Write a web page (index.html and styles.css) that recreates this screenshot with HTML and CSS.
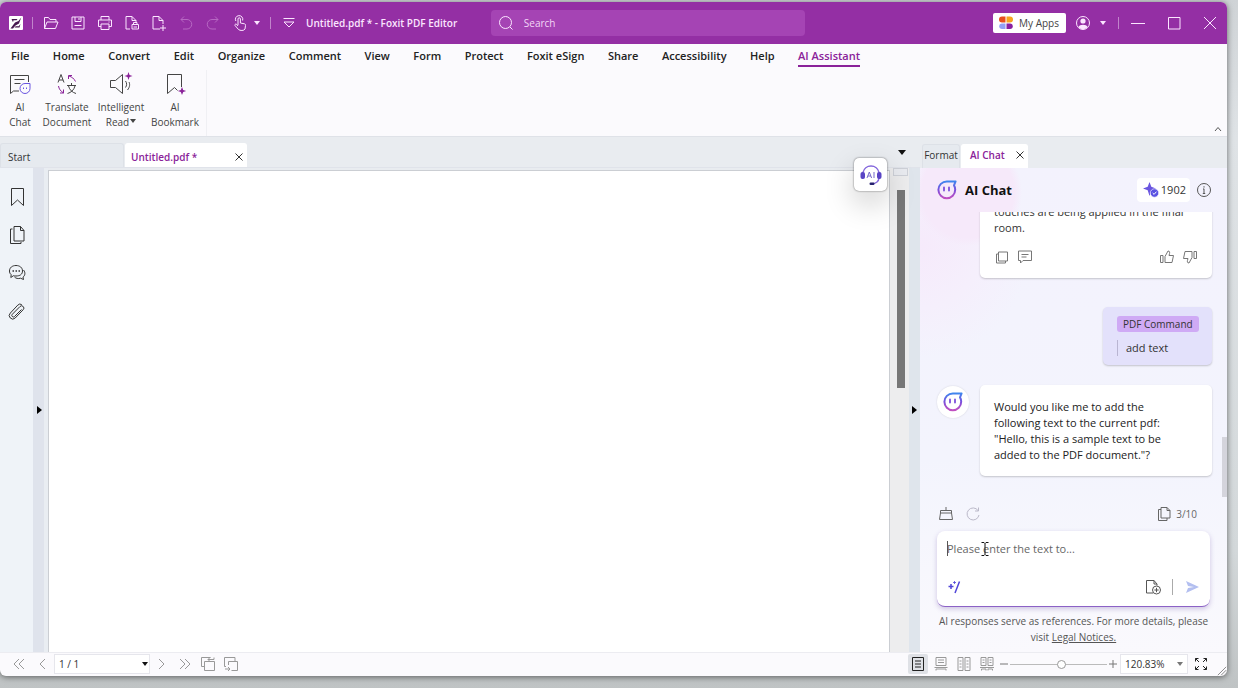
FILE: index.html
```html
<!DOCTYPE html>
<html lang="en">
<head>
<meta charset="utf-8">
<title>Untitled.pdf * - Foxit PDF Editor</title>
<link rel="stylesheet" href="styles.css">
</head>
<body>
<svg class="defs" aria-hidden="true">
  <defs>
    <linearGradient id="brand" x1="0" y1="0" x2="0" y2="1">
      <stop offset="0" stop-color="#3f86ee"/><stop offset=".5" stop-color="#7b4fdc"/><stop offset="1" stop-color="#c04fc0"/>
    </linearGradient>
    <symbol id="bot" viewBox="0 0 20 20">
      <path d="M18.600 1.400H9.800A8.400 8.400 0 1 0 18.200 9.800C18.200 7.800 17.700 6.400 17 5.400Z" fill="none" stroke="url(#brand)" stroke-width="2" stroke-linejoin="round"/>
      <path d="M7 7.500v3M12 7.500v3" stroke="#7b4fdc" stroke-width="1.800" stroke-linecap="round"/>
    </symbol>
  </defs>
</svg>
<div class="window">
  <header class="titlebar">
    <svg class="icon logo" viewBox="0 0 14 14"><rect width="14" height="14" rx="1" fill="#fff"/><path d="M2.500 3h6l-1 1.200h-3L4 6.200ZM12.200 1.500L10 7.500 6.500 9.500 4 12.500H1.500L6 6.500 9.500 5ZM11.500 8L10.500 11.500H5.500l1.200-1.200h3Z" fill="#47184f"/></svg>
    <span class="bar"></span>
    <div class="quick">
      <button aria-label="Open"><svg class="icon" viewBox="0 0 16 16"><path d="M1.500 13.500v-11h4l1.500 2h6v2.500M1.500 13.500L4 7h11l-2.500 6.500Z"/></svg></button>
      <button aria-label="Save"><svg class="icon" viewBox="0 0 16 16"><path d="M2 2h12v12H2ZM5 2v4.500h6V2M9 3v2M4.500 10.500h7"/></svg></button>
      <button aria-label="Print"><svg class="icon" viewBox="0 0 16 16"><path d="M4 5V1.500h8V5M4 11.500H1.500v-6.500h13v6.500H12M4 9h8v5.500H4ZM11.500 7h1"/></svg></button>
      <button aria-label="Print to PDF"><svg class="icon" viewBox="0 0 16 16"><path d="M6 14H2V1.500h6L12 5.500V7M8 1.500v4h4M8 9.500h6.500v4.500H8ZM9.500 9.500V7.500h3.500v2M9.500 12h3.500"/></svg></button>
      <button aria-label="New document"><svg class="icon" viewBox="0 0 16 16"><path d="M9 14H2V1.500h6L12 5.500V9M8 1.500v4h4M12 10v6M9 13h6"/></svg></button>
      <button class="dim" aria-label="Undo"><svg class="icon" viewBox="0 0 16 16"><path d="M6 1.500L3 4.500 6 7.500M3 4.500h6a4.500 4.500 0 0 1 0 9.500H5"/></svg></button>
      <button class="dim" aria-label="Redo"><svg class="icon" viewBox="0 0 16 16"><path d="M10 1.500l3 3-3 3M13 4.500H7a4.500 4.500 0 0 0 0 9.500h4"/></svg></button>
      <button aria-label="Hand tool"><svg class="icon" viewBox="0 0 16 16"><path d="M6 10V4a1.200 1.200 0 0 1 2.400 0v4l4 .8c1 .2 1.300.8 1.100 1.700L13 14c-1 2-5 1.800-6.500.5L3 10.500c-.5-1.500 1-1.700 1.800-1L6 11M3.800 6A3.700 3.700 0 1 1 10.600 5.500"/></svg></button>
    </div>
    <svg class="caret" viewBox="0 0 6 4"><path d="M0 0h6L3 4Z"/></svg>
    <span class="bar"></span>
    <button class="customize" aria-label="Customize toolbar"><svg class="icon" viewBox="0 0 16 16"><path d="M2.500 3.500h11M3 7l5 5 5-5Z"/></svg></button>
    <h1 class="title">Untitled.pdf * - Foxit PDF Editor</h1>
    <label class="search">
      <svg class="icon" viewBox="0 0 16 16"><circle cx="7.500" cy="7.500" r="6"/><path d="M12 12l2.500 2.500"/></svg>
      <input type="text" placeholder="Search" aria-label="Search">
    </label>
    <div class="account">
      <button class="apps"><svg class="icon" viewBox="0 0 14 14"><path d="M3.500 0.500H6.500V6.500H3a3 3 0 0 1 0-6Z" fill="#e8501c"/><path d="M7.500.500H11a3 3 0 0 1 0 6H7.500Z" fill="#f7a41d"/><path d="M3 7.500H6.500V13H3a2.700 2.700 0 0 1 0-5.500Z" fill="#93a0f4"/><path d="M7.500 7.500H11a2.700 2.700 0 0 1 0 5.500H7.500Z" fill="#8a1fa0"/></svg>My Apps</button>
      <button aria-label="Account"><svg class="icon" viewBox="0 0 16 16"><circle cx="8" cy="8" r="6.500"/><circle cx="8" cy="6" r="2.600" class="solid"/><path class="solid" d="M3.500 12c1-3 8-3 9 0-2 3-7 3-9 0Z"/></svg></button>
      <svg class="caret" viewBox="0 0 6 4"><path d="M0 0h6L3 4Z"/></svg>
      <span class="bar"></span>
    </div>
    <div class="controls">
      <button aria-label="Minimize"><svg class="icon" viewBox="0 0 16 16"><path d="M1 8.500h14"/></svg></button>
      <button aria-label="Maximize"><svg class="icon" viewBox="0 0 16 16"><path d="M2.500 2.500h11.500v11.500H2.500Z"/></svg></button>
      <button aria-label="Close"><svg class="icon" viewBox="0 0 16 16"><path d="M2 2l12 12M14 2L2 14"/></svg></button>
    </div>
  </header>

  <nav class="menu">
    <button>File</button><button>Home</button><button>Convert</button><button>Edit</button><button>Organize</button><button>Comment</button><button>View</button><button>Form</button><button>Protect</button><button>Foxit eSign</button><button>Share</button><button>Accessibility</button><button>Help</button><button class="current">AI Assistant</button>
  </nav>

  <section class="ribbon">
    <div class="group">
      <button class="narrow"><svg viewBox="0 0 24 24"><path d="M20.500 10V3.500H2.500v18l3-2.500H11M6.500 7.500h10M6.500 11.500h6"/><path class="blue" d="M22 11.500H17a5 5 0 1 0 5 5Z"/><path class="blue" d="M15.500 15.500v1.500M18.500 15.500v1.500"/></svg><span>AI<br>Chat</span></button>
      <button><svg viewBox="0 0 24 24"><path d="M3 10.500L6 2.500l3 8M4 8h4M12 13.500h9M16.500 11v2.500M13.500 14c1 4 4 6.500 7.500 7.500M20 14c-1 4-4 6.500-7.500 7.500"/><path class="accent" d="M13.500 3.500h3.500M13.500 3.500V7M14 4c3 1 5 2.500 6.500 5.500M3.500 14c.5 3 2 5 5 7M8.500 17.500V21H5"/></svg><span>Translate<br>Document</span></button>
      <button><svg viewBox="0 0 24 24"><path d="M1.500 8.500h5l7-6v19l-7-6h-5ZM16.500 9c1.500 2 1.500 4.500 0 6.500M18.500 18c2.500-3 2.500-6 1.500-8"/><path class="spark" d="M19.500 0l1 3 3 1-3 1-1 3-1-3-3-1 3-1Z"/></svg><span>Intelligent<br>Read<svg class="tiny" viewBox="0 0 6 4"><path d="M0 0h6L3 4Z"/></svg></span></button>
      <button><svg viewBox="0 0 24 24"><path d="M18.500 15V2.500H4.500v19l7-6 3 3"/><path class="spark" d="M19 15l1.200 3 3 1-3 1L19 23l-1.200-3-3-1 3-1Z"/></svg><span>AI<br>Bookmark</span></button>
    </div>
    <button class="collapse" aria-label="Collapse ribbon"><svg viewBox="0 0 8 6"><path d="M1 5l3-3.500L7 5"/></svg></button>
  </section>

  <main class="workspace">
    <section class="document">
      <div class="tabs">
        <button class="tab">Start</button>
        <button class="tab open">Untitled.pdf * <svg viewBox="0 0 8 8"><path d="M.500.500l7 7M7.500.500l-7 7"/></svg></button>
        <button class="tablist" aria-label="List tabs"><svg viewBox="0 0 8 5"><path d="M0 0h8L4 5Z"/></svg></button>
      </div>
      <div class="viewer">
        <aside class="side">
          <button aria-label="Bookmarks"><svg viewBox="0 0 18 20"><path d="M3.500 1.500h12v17l-6-5.500-6 5.500Z"/></svg></button>
          <button aria-label="Pages"><svg viewBox="0 0 18 20"><path d="M6 1.500h6.500l3.500 4v10.500H6ZM12.500 1.500v4H16M4.500 4H2.500v14.500H13V17"/></svg></button>
          <button aria-label="Comments"><svg viewBox="0 0 18 20"><path d="M8 2.500c3.800 0 6.500 2.200 6.500 5.500S12 13 8 13c-1 0-1.600 0-2.500-.3L2.800 14.500l.4-2.800C1.900 10.600 1.500 9.500 1.500 8c0-3.300 2.700-5.500 6.500-5.500ZM15.500 7c2.500 3 1.200 6-.5 7l.5 2.500-3-1.300c-2.500.8-4.500.2-6-1.200"/><path d="M4.500 8h1.500M7.500 8H9M10.500 8H12" stroke-width="1.600"/></svg></button>
          <button aria-label="Attachments"><svg viewBox="0 0 18 20"><path d="M13.500 8.500l-7 7a1.500 1.500 0 0 1-2.200-2.200L12 5.500a2.200 2.200 0 0 1 3.200 3.200l-8 8.300a3.400 3.400 0 0 1-4.900-4.900l7.500-8a3 3 0 0 1 4-.4"/></svg></button>
        </aside>
        <div class="split left"><svg viewBox="0 0 5 8"><path d="M0 0l5 4-5 4Z"/></svg></div>
        <div class="page"></div>
        <div class="scroll"><span class="marker"></span><span class="thumb"></span></div>
        <div class="split"><svg viewBox="0 0 5 8"><path d="M0 0l5 4-5 4Z"/></svg></div>
      </div>
      <button class="assistant" aria-label="AI assistant"><svg viewBox="0 0 24 24"><path d="M4 9.500a8.200 8.200 0 0 1 16 0M20 15c-.5 4-3 5.500-7 5.800" fill="none" stroke="#8467dc" stroke-width="1.500"/><rect x="1.500" y="9" width="4.500" height="7" rx="2" fill="#5944c4"/><rect x="18" y="9" width="4.500" height="7" rx="2" fill="#5944c4"/><rect x="10.500" y="19.500" width="5" height="2.500" rx="1.200" fill="#26216e"/><path d="M8 15l2.300-6 2.300 6M8.800 13h3M15 9v6" fill="none" stroke="#7669c9"/></svg></button>
    </section>

    <aside class="panel">
      <div class="tabs paneltabs">
        <button class="tab small">Format</button>
        <button class="tab open">AI Chat <svg viewBox="0 0 8 8"><path d="M.500.500l7 7M7.500.500l-7 7"/></svg></button>
      </div>
      <div class="chat">
        <header class="chathead">
          <svg class="bot"><use href="#bot"/></svg>
          <h2>AI Chat</h2>
          <span class="credits"><svg viewBox="0 0 16 16"><path d="M6.500 0l1.800 4.700L13 6.500 8.300 8.300 6.500 14 4.700 8.300 0 6.500l4.700-1.800Z" fill="#6a55e0"/><circle cx="11.500" cy="11" r="4.200" fill="#5a52e2" stroke="#fff" stroke-width=".6"/><path d="M9.700 11l1.400 1.400 2.300-2.700" fill="none" stroke="#fff"/></svg>1902</span>
          <button class="info" aria-label="Information"><svg viewBox="0 0 16 16"><circle cx="8" cy="8" r="6.500"/><path d="M8 6.800v4.700M8 4.200v1.400M6.800 11.500h2.400M7 7h1"/></svg></button>
        </header>
        <div class="messages">
          <article class="card">
            <p>touches are being applied in the final room.</p>
            <div class="tools">
              <button aria-label="Copy"><svg viewBox="0 0 16 16"><path d="M4.500 3h9v9h-9ZM4.500 5H2.500v9H11.500V12"/></svg></button>
              <button aria-label="Comment"><svg viewBox="0 0 16 16"><path d="M1.500 2h13v9.500H6L3.500 14V11.500h-2ZM4.500 5.500h7M4.500 8h5"/></svg></button>
              <button class="push" aria-label="Like"><svg viewBox="0 0 16 16"><path d="M1.500 6.500H4v7H1.500ZM6 13V7.500L9 2c2 0 2 1.500 1 4.500h4.500l-1.500 7H6Z"/></svg></button>
              <button aria-label="Dislike"><svg viewBox="0 0 16 16"><path d="M14.500 9.500H12v-7h2.500ZM10 3v5.500L7 14c-2 0-2-1.500-1-4.500H1.500l1.500-7h7Z"/></svg></button>
            </div>
          </article>
          <article class="command"><span class="tag">PDF Command</span><p>add text</p></article>
          <div class="reply">
            <span class="avatar"><svg class="bot"><use href="#bot"/></svg></span>
            <article class="card"><p>Would you like me to add the following text to the current pdf: "Hello, this is a sample text to be added to the PDF document."?</p></article>
          </div>
        </div>
        <div class="session">
          <button aria-label="Clear chat"><svg viewBox="0 0 16 16"><path d="M2.500 4.500h11M2.500 4.500V7M13.500 4.500V7M2.500 7h11l1 6.500h-13ZM8 1v3.500"/></svg></button>
          <button class="faint" aria-label="Regenerate"><svg viewBox="0 0 16 16"><path d="M13 4.500A6 6 0 1 0 14 9M13.500 1.500v3.500H10"/></svg></button>
          <span class="count"><svg viewBox="0 0 16 16"><path d="M5 1.500h6l3 3V12H5ZM11 1.500v3h3M5 3.500H2.500v11H11V12"/></svg>3/10</span>
        </div>
        <div class="composer">
          <textarea rows="2" placeholder="Please enter the text to..." aria-label="Message"></textarea>
          <span class="insertion"></span>
          <svg class="pointer" viewBox="0 0 10 16"><path d="M1.500 1.500h2.500l1 1 1-1h2.500M5 2.500v11M1.500 14.500h2.500l1-1 1 1h2.500"/></svg>
          <div class="actions">
            <button aria-label="Prompts"><svg viewBox="0 0 16 16" class="magic"><path d="M12.500 2.500L8 14M1.500 7.500h5M4 5v5"/><path d="M7.500 2v3M6 3.500h3" stroke-width=".8"/></svg></button>
            <button class="push" aria-label="Add document"><svg viewBox="0 0 16 16"><path d="M8 14H1.500V1.500H9l3 3.500v1.500M9 1.500V5h3"/><circle cx="11.500" cy="11" r="4"/><path d="M11.500 8.800v4.400M9.300 11h4.400"/></svg></button>
            <span class="rule"></span>
            <button aria-label="Send"><svg viewBox="0 0 16 16"><path d="M2 2l13 6L2 14l2-5 6-1-6-1Z" fill="#b3bff0" stroke="none"/></svg></button>
          </div>
        </div>
        <p class="notice">AI responses serve as references. For more details, please visit <a href="#">Legal Notices.</a></p>
        <span class="chatscroll"></span>
      </div>
    </aside>
  </main>

  <footer class="status">
    <button aria-label="First page"><svg viewBox="0 0 16 16"><path d="M8 3L3 8l5 5M13 3L8 8l5 5"/></svg></button>
    <button aria-label="Previous page"><svg viewBox="0 0 16 16"><path d="M11 3L6 8l5 5"/></svg></button>
    <span class="pick pages"><select aria-label="Page"><option>1 / 1</option></select><svg viewBox="0 0 6 4"><path d="M0 0h6L3 4Z"/></svg></span>
    <button aria-label="Next page"><svg viewBox="0 0 16 16"><path d="M5 3l5 5-5 5"/></svg></button>
    <button aria-label="Last page"><svg viewBox="0 0 16 16"><path d="M3 3l5 5-5 5M8 3l5 5-5 5"/></svg></button>
    <button aria-label="Previous view"><svg viewBox="0 0 16 16"><path d="M4.500 5.500h10v9h-10ZM4 10.500H1.500v-9h9M14 1.500v2H8M10 1.500l-2 2 2 2"/></svg></button>
    <button aria-label="Next view"><svg viewBox="0 0 16 16"><path d="M12 5V1.500H1.500v9H3M5.500 5.500h9v9h-6M5.500 5.500V9M2 13h5M5 11l2 2-2 2"/></svg></button>
    <div class="views">
      <button class="on" aria-label="Single page"><svg viewBox="0 0 16 16"><path d="M2.500 1.500h11v13h-11ZM5 5h6M5 8h6M5 11h6"/></svg></button>
      <button aria-label="Continuous"><svg viewBox="0 0 16 16"><path d="M3 1.500h10v8H3ZM5 4h6M5 6.500h6M1.500 11.500h13M3 14.500v-1.500h10v1.500"/></svg></button>
      <button aria-label="Facing"><svg viewBox="0 0 16 16"><path d="M2 1.500h5v13H2ZM9 1.500h5v13H9ZM3.500 5h2M3.500 8h2M3.500 11h2M10.500 5h2M10.500 8h2M10.500 11h2"/></svg></button>
      <button aria-label="Continuous facing"><svg viewBox="0 0 16 16"><path d="M2 1.500h5v8H2ZM9 1.500h5v8H9ZM3.500 4h2M3.500 6.500h2M10.500 4h2M10.500 6.500h2M1 11.500h14M2.500 14.500v-1.500H7v1.500M9 14.500v-1.500h4.500v1.500"/></svg></button>
      <button class="step" aria-label="Zoom out"><svg viewBox="0 0 8 8"><path d="M0 4h8"/></svg></button>
      <input type="range" aria-label="Zoom" min="0" max="100" value="53">
      <button class="step" aria-label="Zoom in"><svg viewBox="0 0 8 8"><path d="M0 4h8M4 0v8"/></svg></button>
      <span class="pick zoom"><select aria-label="Zoom level"><option>120.83%</option></select><svg viewBox="0 0 6 4"><path d="M0 0h6L3 4Z"/></svg></span>
      <button class="full" aria-label="Full screen"><svg viewBox="0 0 16 16"><path d="M2.500 5.500v-3h3M2.500 2.500L6 6M10.500 2.500h3v3M13.500 2.500L10 6M2.500 10.500v3h3M2.500 13.500L6 10M13.500 10.500v3h-3M13.500 13.500L10 10"/></svg></button>
    </div>
    <svg class="grip" viewBox="0 0 12 12"><path d="M1 11L11 1M5 11l6-6M9 11l2-2"/></svg>
  </footer>
</div>
</body>
</html>
```
FILE: styles.css
```css
* { box-sizing: border-box; }
body { margin: 0; height: 100vh; padding: 2px 11px 12px 0; display: flex; background: linear-gradient(180deg, #cfd3d6, #dfe3e6 20%, #d3d8da 80%, #bfc3c4); font-family: "Open Sans", "Noto Sans", sans-serif; font-size: 10px; line-height: 16px; color: #333; }
h1, h2, p { margin: 0; font: inherit; }
button, input, select, textarea { font: inherit; color: inherit; border: 0; background: none; padding: 0; margin: 0; outline: 0; }
button { display: flex; align-items: center; justify-content: center; }
svg { display: block; flex: none; width: 16px; height: 16px; fill: none; stroke: currentColor; stroke-width: 1; }
.defs { position: absolute; width: 0; height: 0; }
.window { flex: 1; min-width: 0; display: flex; flex-direction: column; background: #fbfafd; border-radius: 6px; overflow: hidden; box-shadow: 0 1px 6px #0008; }

.titlebar { flex: none; height: 42px; display: flex; align-items: center; padding: 0 9px; background: #942fa4; color: #fbe6ff; position: relative; }
.titlebar .logo { width: 14px; height: 14px; stroke: none; }
.bar { width: 1px; height: 12px; background: #c184cb; }
.logo + .bar { margin: 0 10px 0 9px; }
.quick { display: flex; gap: 11px; }
.dim { color: #b768c3; }
.caret, .tiny { width: 6px; height: 4px; fill: currentColor; stroke: none; }
.quick + .caret { margin: 0 10px 0 6px; }
.customize { margin: 0 9px 0 10px; }
.title { font-weight: 600; }
.search { position: absolute; left: 40%; top: 8px; width: 314px; height: 26px; display: flex; align-items: center; gap: 10px; padding-left: 7px; background: #a544b4; border-radius: 4px; }
.search input { flex: 1; min-width: 0; }
.search input::placeholder { color: #f3d6f7; opacity: 1; }
.account { margin-left: auto; display: flex; align-items: center; gap: 9px; }
.apps { height: 20px; padding: 0 7px 0 6px; gap: 6px; background: #fff; border-radius: 2px; color: #444; }
.apps svg { width: 14px; height: 14px; stroke: none; }
.account .bar { margin: 0 4px 0 3px; }
.account .solid { fill: currentColor; stroke: none; }
.controls { display: flex; gap: 20px; margin-left: 7px; }

.menu { flex: none; width: 71%; height: 26px; padding: 0 11px; display: flex; align-items: center; justify-content: space-between; font-size: 11px; font-weight: 600; color: #222; }
.menu button { height: 20px; border-bottom: 2px solid transparent; white-space: nowrap; }
.menu .current { color: #8a2299; border-color: #8a2299; }
.ribbon { flex: none; height: 67px; display: flex; align-items: flex-end; justify-content: space-between; border-bottom: 1px solid #dfe2e8; }
.group { align-self: stretch; display: flex; width: 207px; padding-top: 2px; border-right: 1px solid #f0f0f4; }
.group button { flex-direction: column; justify-content: flex-start; width: 54px; gap: 4px; color: #444; }
.group .narrow { width: 40px; }
.group svg { width: 24px; height: 24px; }
.group span { line-height: 15px; white-space: nowrap; }
.group .tiny { display: inline-block; width: 6px; height: 4px; margin: 0 0 3px 1px; }
.group .blue { stroke: #6a55e0; }
.group .accent { stroke: #8a2299; }
.group .spark { fill: #8a2299; stroke: none; }
.collapse { padding: 4px 5px; color: #555; }
.collapse svg { width: 8px; height: 6px; }

.workspace { flex: 1; min-height: 0; display: flex; background: #e9ecf0; }
.document { flex: 1; min-width: 0; display: flex; flex-direction: column; position: relative; }
.tabs { flex: none; height: 31px; display: flex; align-items: flex-end; gap: 1px; border-bottom: 1px solid #e0e3ea; }
.tab { width: 124px; height: 24px; padding: 2px 7px 0; justify-content: flex-start; background: #e6eaef; border: 1px solid #dde1e7; border-bottom: 0; border-radius: 3px 3px 0 0; }
.tab.open { width: 122px; padding: 2px 3px 0 5px; justify-content: space-between; background: #fff; border-color: #fff; color: #8a2299; font-weight: 600; }
.tab svg { width: 8px; height: 8px; color: #333; }
.tablist { height: 30px; margin-left: auto; padding: 0 14px; color: #111; }
.tablist svg { width: 8px; height: 5px; fill: currentColor; stroke: none; }
.viewer { flex: 1; min-height: 0; display: flex; }
.side { width: 33px; padding-top: 19px; display: flex; flex-direction: column; align-items: center; gap: 18px; background: #eff3f8; }
.side svg { width: 18px; height: 20px; }
.split { width: 11px; display: flex; align-items: center; justify-content: center; background: #dfe5ec; }
.split.left { width: 15px; background: linear-gradient(90deg, #dfe3ec 11px, #e9edf2 11px); padding-right: 3px; }
.split svg { width: 5px; height: 8px; fill: #000; stroke: none; }
.page { flex: 1; margin-top: 2px; background: #fff; border: 1px solid #cbced3; border-bottom: 0; }
.scroll { width: 19px; display: flex; flex-direction: column; align-items: center; background: #ededee; padding-left: 2px; }
.marker { width: 15px; height: 8px; border: 1px solid #ced1d8; background: #e9ebf0; }
.thumb { width: 8px; height: 41%; margin-top: 14px; background: #777; }
.assistant { position: absolute; right: 33px; top: 21px; width: 33px; height: 33px; background: #fff; border-radius: 5px; box-shadow: 0 0 2px #0009, 0 12px 30px #0003; }
.assistant svg { width: 24px; height: 24px; stroke: none; }

.panel { width: 307px; display: flex; flex-direction: column; }
.paneltabs { gap: 1px; padding-left: 2px; border-bottom: 0; }
.paneltabs .tab { width: 38px; padding: 0 0 4px; justify-content: center; }
.paneltabs .tab.open { width: 67px; padding: 0 3px 4px 8px; justify-content: space-between; }
.chat { flex: 1; min-height: 0; position: relative; display: flex; flex-direction: column; background: radial-gradient(circle at 48px 24px, #f6e9fa 0 46px, transparent 54px), radial-gradient(circle at 0 80px, #f6eafb 0, #f5effc 60px, transparent 110px), linear-gradient(#f3f2fd, #f3f4fd 60%, #faf9fd); }
.chathead { flex: none; height: 44px; padding: 0 15px 0 17px; display: flex; align-items: center; }
.bot { width: 20px; height: 20px; stroke: none; }
.chathead h2 { margin-left: 8px; font-size: 13px; font-weight: 700; color: #111; }
.credits { margin-left: auto; height: 24px; padding: 0 4px 0 6px; display: flex; align-items: center; gap: 2px; font-size: 11px; background: #fff; border-radius: 4px; }
.credits svg { stroke: none; }
.info { margin-left: 6px; color: #555; }
.messages { flex: 1; min-height: 0; overflow: hidden; padding: 0 15px 23px 17px; display: flex; flex-direction: column; justify-content: flex-end; font-size: 11px; }
.card { width: 232px; padding: 14px 14px 13px; background: #fff; border-radius: 5px; box-shadow: 0 1px 2px #0003; color: #333; }
.messages > .card { align-self: flex-end; }
.tools { display: flex; gap: 7px; margin-top: 13px; color: #777; }
.push { margin-left: auto; }
.command { align-self: flex-end; width: 109px; margin: 29px 0 20px; padding: 9px 14px; display: flex; flex-direction: column; align-items: flex-start; gap: 8px; background: #e3e1fb; border-radius: 5px; box-shadow: 0 1px 2px #0003; }
.tag { padding: 0 6px; background: #cfaaf5; border-radius: 3px; font-size: 10px; white-space: nowrap; }
.command p { padding-left: 8px; border-left: 1px solid #b9b5d2; }
.reply { display: flex; justify-content: space-between; }
.avatar { width: 32px; height: 32px; margin-top: 1px; display: flex; align-items: center; justify-content: center; background: #fff; border-radius: 50%; box-shadow: 0 0 2px #0002; }
.reply .card { padding-right: 28px; color: #222; }
.session { flex: none; height: 32px; padding: 0 30px 2px 18px; display: flex; align-items: center; gap: 11px; color: #666; }
.faint { color: #bbb9c9; }
.count { margin-left: auto; display: flex; align-items: center; gap: 4px; }
.composer { flex: none; position: relative; height: 76px; margin: 0 17px; padding: 10px 10px 11px; display: flex; flex-direction: column; justify-content: space-between; background: #fff; border-bottom: 1px solid #8c62c6; border-radius: 8px; box-shadow: 0 2px 5px #5a3a9944; font-size: 11px; }
.composer textarea { resize: none; line-height: 16px; height: 32px; }
.composer textarea::placeholder { color: #666; opacity: 1; }
.insertion { position: absolute; left: 10px; top: 10px; width: 1px; height: 15px; background: #555; }
.pointer { position: absolute; left: 43px; top: 10px; width: 10px; height: 16px; color: #111; }
.actions { display: flex; align-items: center; gap: 11px; color: #555; }
.magic { color: #5146d8; stroke-width: 1.5; }
.rule { width: 1px; height: 16px; background: #aaa; }
.notice { flex: none; padding: 6px 14px 7px; text-align: center; color: #555; }
.notice a { color: inherit; }
.chatscroll { position: absolute; right: 0; bottom: 155px; width: 5px; height: 60px; background: #d4d4dc; }

.status { flex: none; height: 24px; position: relative; display: flex; align-items: center; gap: 7px; padding: 0 18px 1px 11px; border-top: 1px solid #ececf1; color: #999; }
.pick { position: relative; display: flex; height: 20px; }
.pick select { appearance: none; width: 100%; padding: 0 4px; background: #fff; border: 1px solid #e6e6ec; color: #333; }
.pick svg { position: absolute; right: 2px; top: 8px; width: 6px; height: 4px; fill: #111; stroke: none; }
.pages { width: 96px; margin: 0 -3px; }
.zoom { width: 68px; margin: 0 -2px; }
.zoom svg { right: 5px; fill: #777; }
.views { margin-left: auto; display: flex; align-items: center; gap: 7px; }
.on { width: 20px; height: 20px; margin-right: -2px; background: #dfe1e6; color: #222; border-radius: 2px; }
.step { color: #777; margin: 0 -2px; }
.step svg { width: 8px; height: 8px; }
.views input { appearance: none; width: 97px; height: 10px; margin: 0 -3px; background: linear-gradient(#bbb, #bbb) center / 100% 1px no-repeat; }
.views input::-webkit-slider-thumb { appearance: none; width: 9px; height: 9px; background: #fff; border: 1px solid #999; border-radius: 50%; }
.full { color: #222; }
.grip { position: absolute; right: 0; bottom: 0; width: 10px; height: 10px; color: #777; }
```
